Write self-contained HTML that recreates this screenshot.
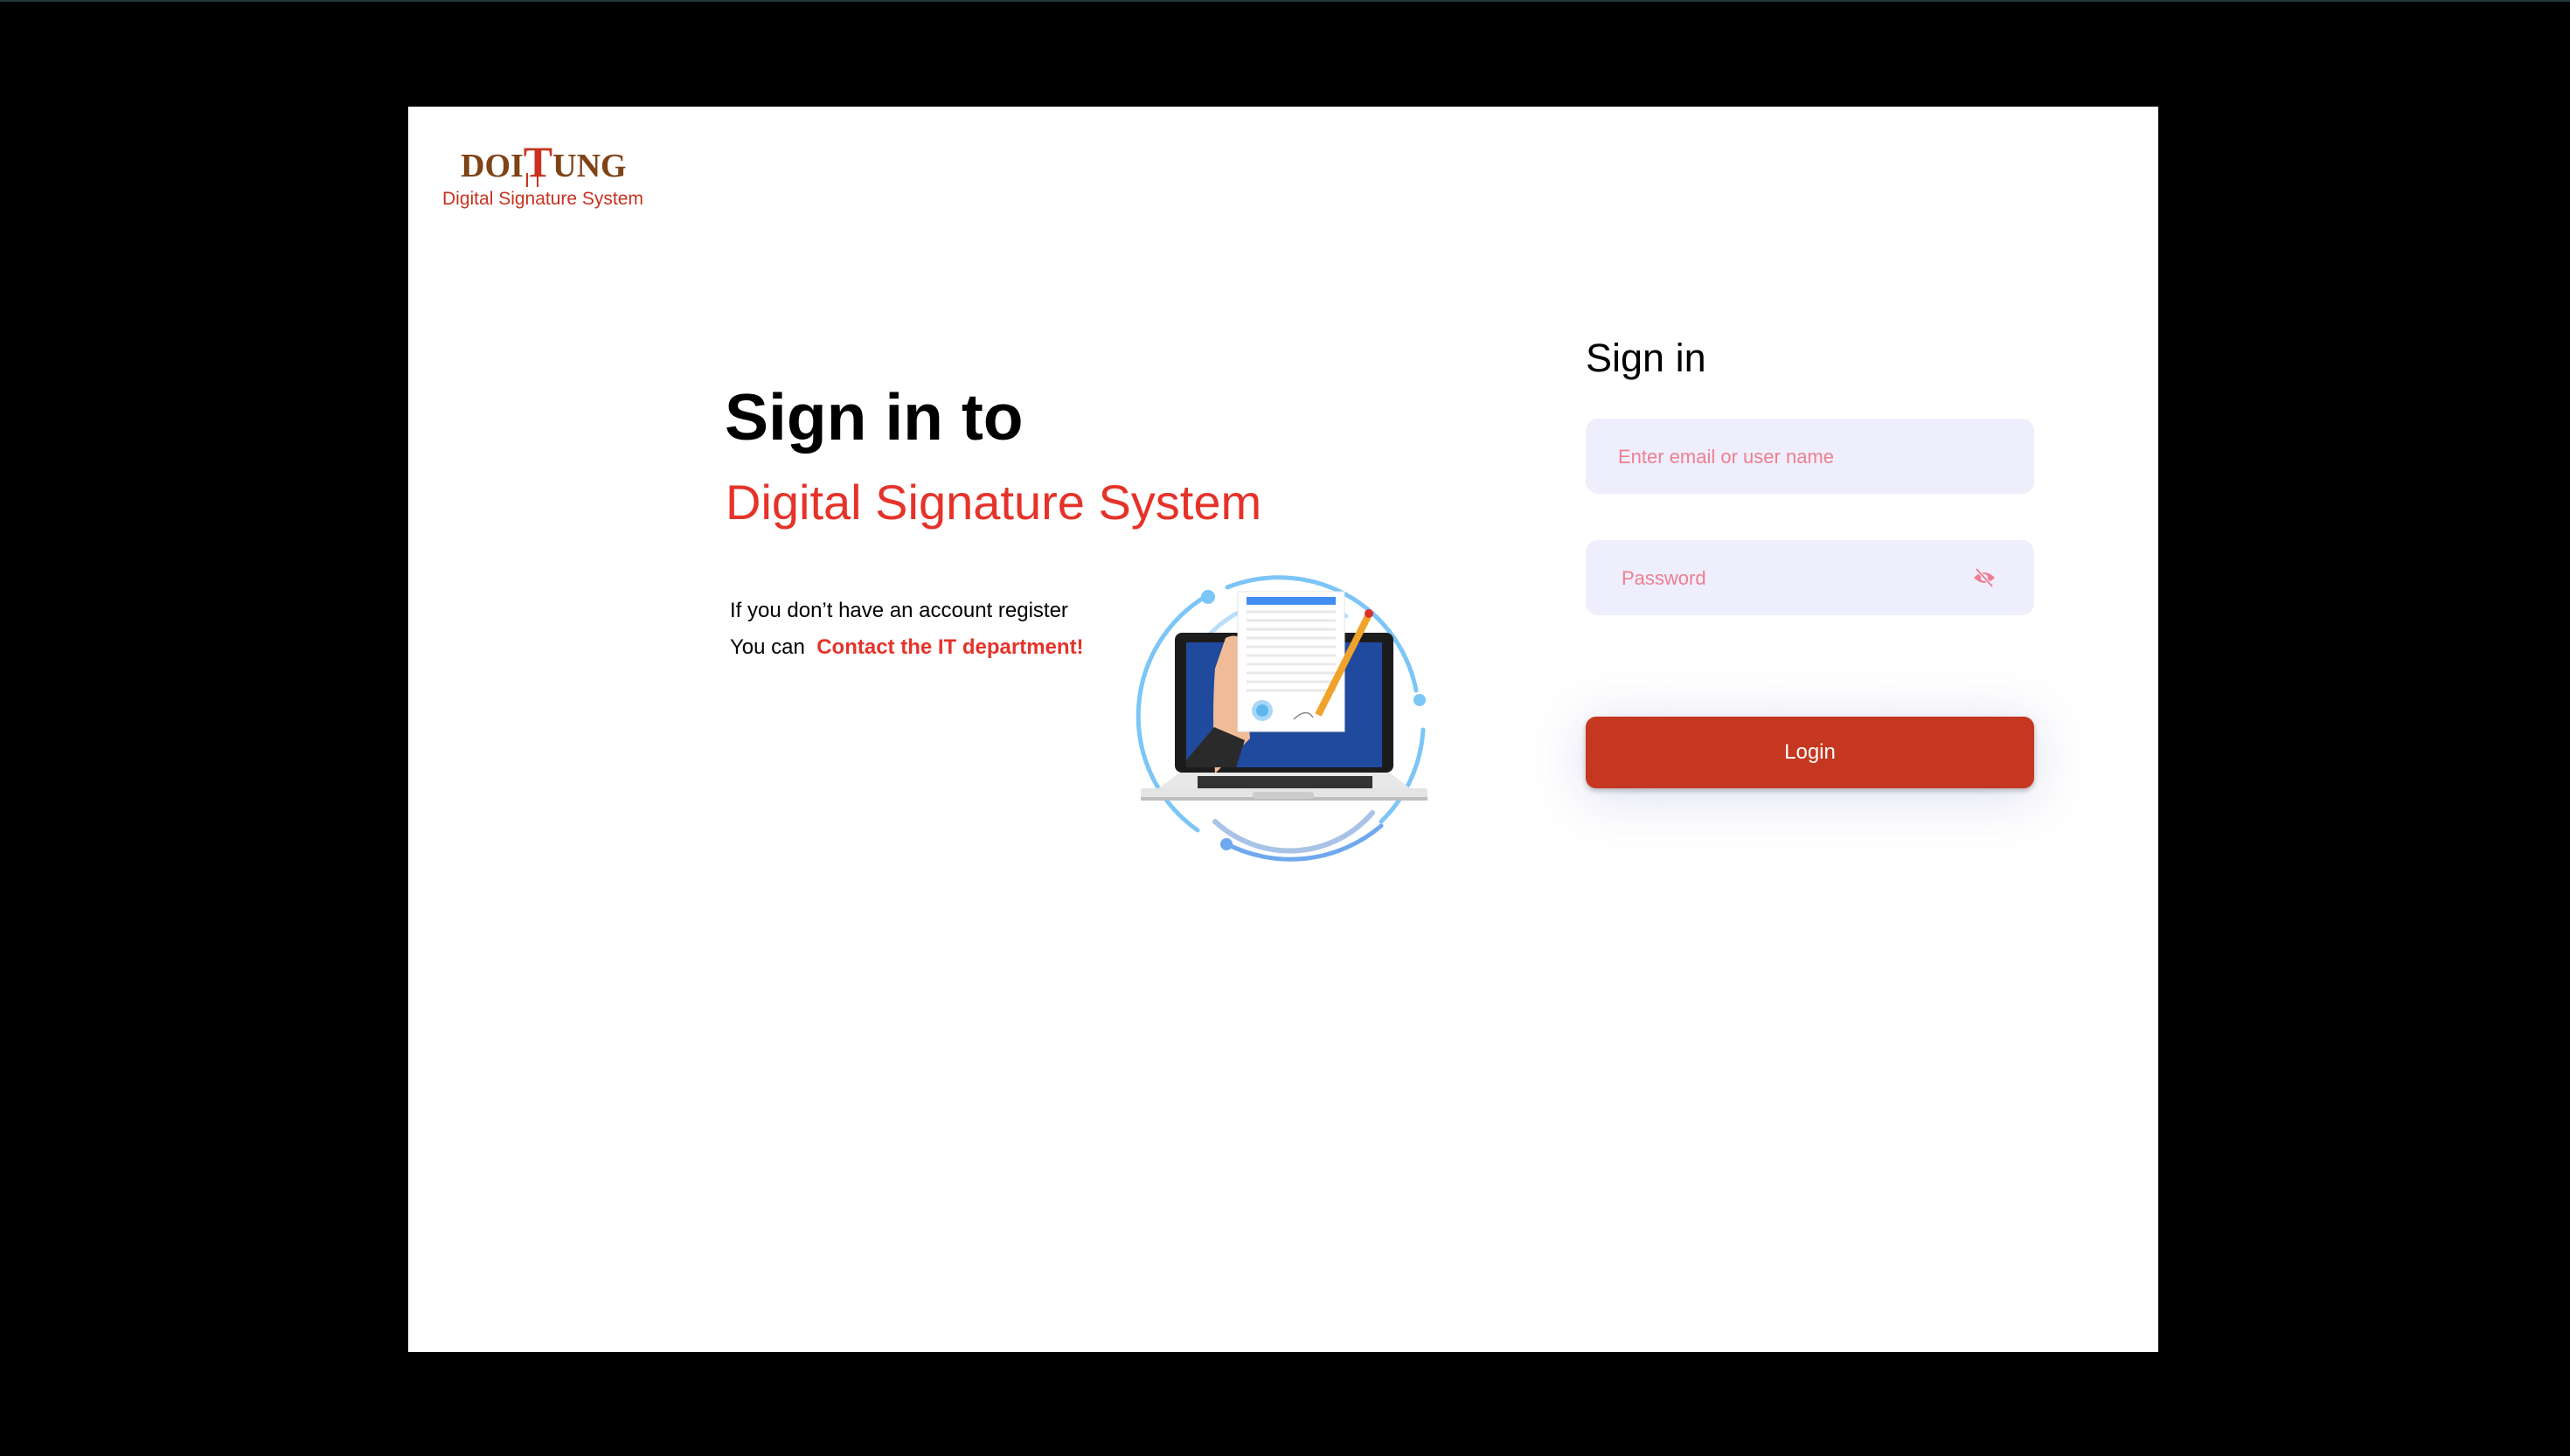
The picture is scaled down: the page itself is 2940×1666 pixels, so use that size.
<!DOCTYPE html>
<html><head><meta charset="utf-8"><style>
html,body{margin:0;padding:0;background:#000;width:2940px;height:1666px;overflow:hidden;font-family:"Liberation Sans",sans-serif}
.card{position:absolute;left:467px;top:122px;width:2002px;height:1425px;background:#fff}
.abs{position:absolute;white-space:nowrap}
.inp{position:absolute;left:1814px;width:513px;height:86px;background:#efeefd;border-radius:14px}
.ph{position:absolute;color:#ee7f8f;font-size:22px;top:31px}
</style></head><body>
<div style="position:absolute;left:0;top:0;width:2940px;height:2px;background:#1d3b3a"></div>
<div class="card"></div>
<!-- logo -->
<div class="abs" style="left:527px;top:162px;font-family:'Liberation Serif',serif;font-size:38px;font-weight:bold;color:#7f4316;letter-spacing:0px;line-height:46px">DOI<span style="color:#c7321f;font-size:50px">T</span>UNG</div>
<div class="abs" style="left:602px;top:198px;width:10px;height:16px;border-left:2px solid #c7321f;border-right:2px solid #c7321f"></div>
<div class="abs" style="left:506px;top:216px;font-size:21px;color:#c7321f">Digital Signature System</div>
<!-- left -->
<div class="abs" style="left:829px;top:432px;font-size:75px;font-weight:bold;color:#000;line-height:90px">Sign in to</div>
<div class="abs" style="left:830px;top:540px;font-size:56px;color:#e5332a;line-height:70px">Digital Signature System</div>
<div class="abs" style="left:835px;top:684px;font-size:24px;color:#000;line-height:30px">If you don’t have an account register</div>
<div class="abs" style="left:835px;top:726px;font-size:24px;color:#000;line-height:30px">You can &nbsp;<b style="color:#e5332a">Contact the IT department!</b></div>
<!-- illustration -->
<svg class="abs" style="left:1280px;top:640px" width="380" height="360" viewBox="0 0 380 360">
<g fill="none" stroke-linecap="round">
<path d="M124 32 A160 160 0 0 1 340 150" stroke="#7cc5f7" stroke-width="5"/>
<path d="M348 195 A160 160 0 0 1 300 300" stroke="#7cc5f7" stroke-width="5"/>
<path d="M100 42 A160 160 0 0 0 90 310" stroke="#7cc5f7" stroke-width="5"/>
<path d="M122 325 A160 160 0 0 0 300 305" stroke="#6fa8ef" stroke-width="5"/>
<path d="M100 90 A125 125 0 0 1 260 65" stroke="#b9def9" stroke-width="5"/>
<path d="M110 300 A125 125 0 0 0 290 290" stroke="#a9c3e6" stroke-width="6"/>
</g>
<circle cx="102" cy="43" r="8" fill="#7cc5f7"/><circle cx="344" cy="161" r="7" fill="#7cc5f7"/><circle cx="123" cy="326" r="7" fill="#6fa8ef"/>
<rect x="64" y="84" width="250" height="160" rx="8" fill="#1c1c1c"/>
<rect x="77" y="95" width="224" height="143" fill="#1f4a9e"/>
<path d="M122 90 q18 -8 20 10 l8 105 -40 40 q-4 -70 0 -120z" fill="#f0bc98"/>
<path d="M77 230 l32 -38 l35 15 -10 31 H77z" fill="#2a2a2a"/>
<rect x="136" y="37" width="122" height="160" fill="#fff" stroke="#e6e6e6"/>
<rect x="146" y="43" width="102" height="9" fill="#3f8ef0"/>
<g stroke="#e8e8e8" stroke-width="3"><path d="M146 60H248M146 70H248M146 80H248M146 90H248M146 100H248M146 110H248M146 120H248M146 130H248M146 140H248M146 150H248"/></g>
<circle cx="164" cy="173" r="12" fill="#a9d7f7"/><circle cx="164" cy="173" r="7" fill="#5fb6ef"/>
<path d="M200 183 q15 -14 22 -2" stroke="#888" fill="none" stroke-width="1.5"/>
<path d="M228 178 L285 65" stroke="#f0a22a" stroke-width="8"/>
<circle cx="286" cy="62" r="5" fill="#d9322b"/>
<path d="M45 262 L70 244 H310 L333 262z" fill="#e8e8e8"/>
<rect x="90" y="248" width="200" height="14" fill="#333"/>
<rect x="25" y="262" width="328" height="12" rx="3" fill="#e4e4e4"/>
<rect x="25" y="272" width="328" height="4" fill="#bdbdbd"/>
<rect x="153" y="266" width="70" height="8" rx="3" fill="#ccc"/>
</svg>
<!-- right -->
<div class="abs" style="left:1814px;top:380px;font-size:45px;color:#000;line-height:60px">Sign in</div>
<div class="inp" style="top:479px"><div class="ph" style="left:37px">Enter email or user name</div></div>
<div class="inp" style="top:618px"><div class="ph" style="left:41px">Password</div>
<svg class="abs" style="left:443px;top:31px" width="26" height="24" viewBox="0 0 26 24"><path d="M1 12 Q13 0 25 12 Q13 24 1 12z" fill="#ee7f8f"/><circle cx="13" cy="12" r="4" fill="#efeefd"/><path d="M4 2 L22 22" stroke="#efeefd" stroke-width="4"/><path d="M4 2 L22 22" stroke="#ee7f8f" stroke-width="2"/></svg></div>
<div class="abs" style="left:1814px;top:820px;width:513px;height:82px;background:#c53720;border-radius:12px;box-shadow:0 8px 60px rgba(110,110,190,0.25),0 3px 6px rgba(0,0,0,0.25);color:#fff;font-size:24px;line-height:82px;text-align:center">Login</div>
</body></html>
